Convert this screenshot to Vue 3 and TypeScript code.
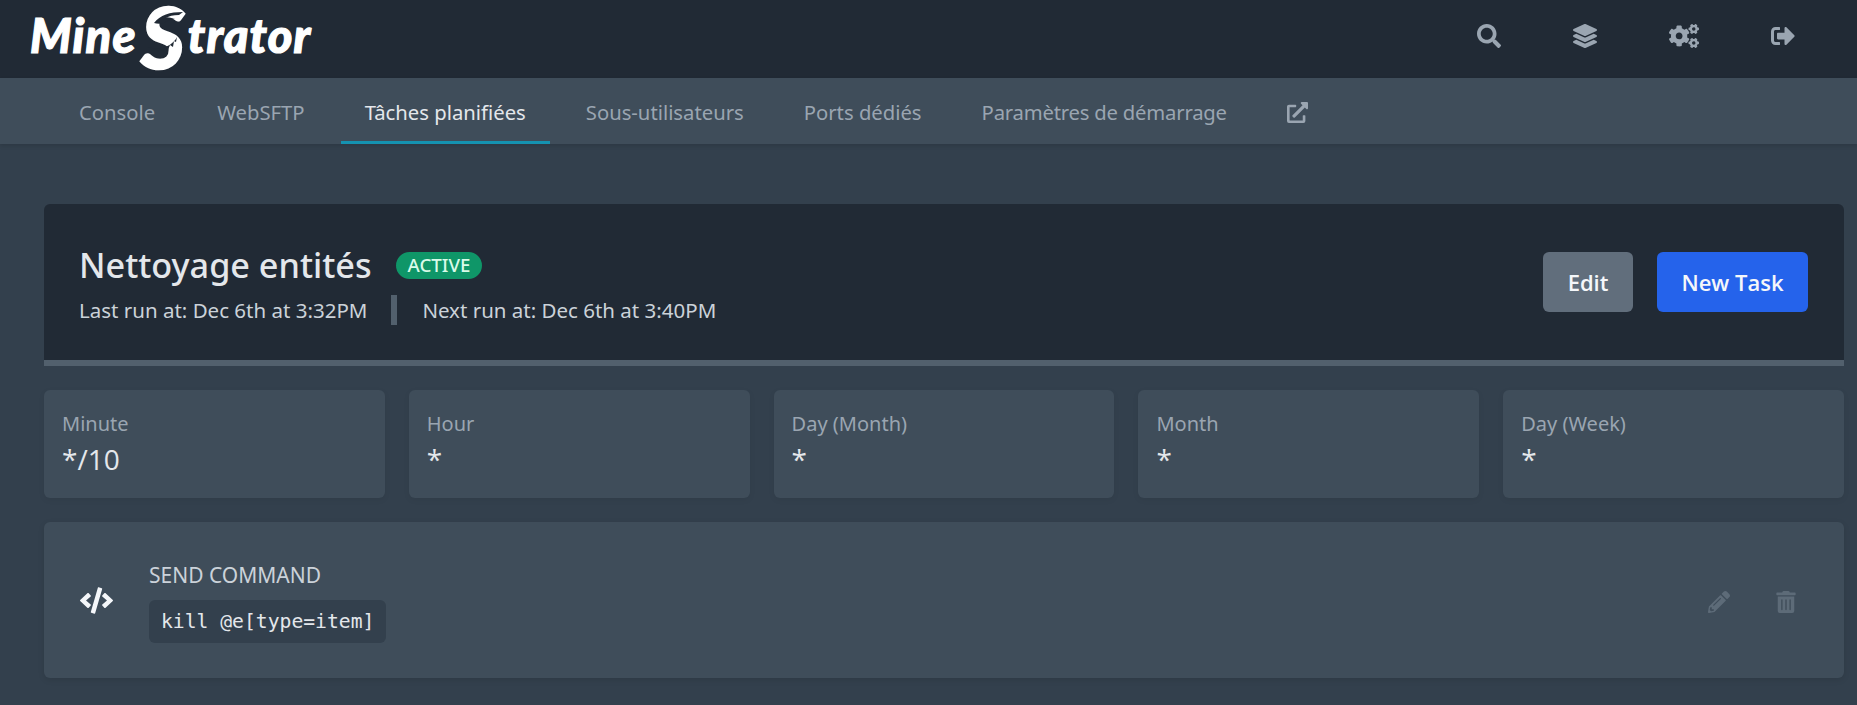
<script setup lang="ts">
const tabs = [
  { label: 'Console', active: false },
  { label: 'WebSFTP', active: false },
  { label: 'Tâches planifiées', active: true },
  { label: 'Sous-utilisateurs', active: false },
  { label: 'Ports dédiés', active: false },
  { label: 'Paramètres de démarrage', active: false },
]
const cron = [
  { label: 'Minute', value: '*/10' },
  { label: 'Hour', value: '*' },
  { label: 'Day (Month)', value: '*' },
  { label: 'Month', value: '*' },
  { label: 'Day (Week)', value: '*' },
]
</script>

<template>
  <div class="page">
    <header class="topbar">
      <div class="logo">
        <span class="logo-word">Mine</span>
        <span class="logo-s">S<svg class="logo-detail" viewBox="0 0 45 62"><path d="M11 21C17 13 27 10 40 10l-4 3c-6 0-10 1-13 3 3 0 6 0 9 1-5 0-8 2-11 4-3 1-7 1-10 0z" /><path d="M6 45l4 4 2-3 3 4 2-4 3 4 2-5 3 3 2-5 3 2 1-6 2 1 1-5c-3 6-9 10-17 11-5 1-8 0-13-1z" /></svg></span>
        <span class="logo-word">trator</span>
      </div>
      <nav class="top-icons">
        <svg class="top-icon" viewBox="0 0 512 512"><path d="M505 442.7L405.3 343c-4.5-4.5-10.6-7-17-7H372c27.6-35.3 44-79.7 44-128C416 93.1 322.9 0 208 0S0 93.1 0 208s93.1 208 208 208c48.3 0 92.7-16.4 128-44v16.3c0 6.4 2.5 12.5 7 17l99.7 99.7c9.4 9.4 24.6 9.4 33.9 0l28.3-28.3c9.4-9.4 9.4-24.6.1-34zM208 336c-70.7 0-128-57.2-128-128 0-70.7 57.2-128 128-128 70.7 0 128 57.2 128 128 0 70.7-57.2 128-128 128z" /></svg>
        <svg class="top-icon" viewBox="0 0 512 512"><path d="M12.41 148.02l232.94 105.67c6.8 3.09 14.49 3.09 21.29 0l232.94-105.67c16.55-7.51 16.55-32.52 0-40.03L266.65 2.31a25.607 25.607 0 0 0-21.29 0L12.41 107.98c-16.55 7.51-16.55 32.53 0 40.04zm487.18 88.28l-58.09-26.33-161.64 73.27c-7.56 3.43-15.59 5.17-23.86 5.17s-16.29-1.74-23.86-5.17L70.51 209.97l-58.1 26.33c-16.55 7.5-16.55 32.5 0 40l232.94 105.59c6.8 3.08 14.49 3.08 21.29 0L499.59 276.3c16.55-7.5 16.55-32.5 0-40zm0 127.8l-57.87-26.23-161.86 73.37c-7.56 3.43-15.59 5.17-23.86 5.17s-16.29-1.74-23.86-5.17L70.29 337.87 12.41 364.1c-16.55 7.5-16.55 32.5 0 40l232.94 105.59c6.8 3.08 14.49 3.08 21.29 0L499.59 404.1c16.55-7.5 16.55-32.5 0-40z" /></svg>
        <svg class="top-icon wide" viewBox="0 0 640 512"><path d="M512.1 191l-8.2 14.3c-3 5.3-9.4 7.5-15.1 5.4-11.8-4.4-22.6-10.7-32.1-18.6-4.6-3.8-5.8-10.5-2.8-15.7l8.2-14.3c-6.9-8-12.3-17.3-15.9-27.4h-16.5c-6 0-11.2-4.3-12.2-10.3-2-12-2.1-24.6 0-37.1 1-6 6.2-10.4 12.2-10.4h16.5c3.6-10.1 9-19.4 15.9-27.4l-8.2-14.3c-3-5.2-1.9-11.9 2.8-15.7 9.5-7.9 20.4-14.2 32.1-18.6 5.7-2.1 12.1.1 15.1 5.4l8.2 14.3c10.5-1.9 21.2-1.9 31.7 0L552 6.3c3-5.3 9.4-7.5 15.1-5.4 11.8 4.4 22.6 10.7 32.1 18.6 4.6 3.8 5.8 10.5 2.8 15.7l-8.2 14.3c6.9 8 12.3 17.3 15.9 27.4h16.5c6 0 11.2 4.3 12.2 10.3 2 12 2.1 24.6 0 37.1-1 6-6.2 10.4-12.2 10.4h-16.5c-3.6 10.1-9 19.4-15.9 27.4l8.2 14.3c3 5.2 1.9 11.9-2.8 15.7-9.5 7.9-20.4 14.2-32.1 18.6-5.7 2.1-12.1-.1-15.1-5.4l-8.2-14.3c-10.4 1.9-21.2 1.9-31.7 0zm-10.5-58.8c38.5 29.6 82.4-14.3 52.8-52.8-38.5-29.7-82.4 14.3-52.8 52.8zM386.3 286.1l33.7 16.8c10.1 5.8 14.5 18.1 10.5 29.1-8.9 24.2-26.4 46.4-42.6 65.8-7.4 8.9-20.2 11.1-30.3 5.3l-29.1-16.8c-16 13.7-34.6 24.6-54.9 31.7v33.6c0 11.6-8.3 21.6-19.7 23.6-24.6 4.2-50.4 4.4-75.9 0-11.5-2-20-11.9-20-23.6V418c-20.3-7.2-38.9-18-54.9-31.7L74 403c-10 5.8-22.9 3.6-30.3-5.3-16.2-19.4-33.3-41.6-42.2-65.7-4-10.9.4-23.2 10.5-29.1l33.3-16.8c-3.9-20.9-3.9-42.4 0-63.4L12 205.8c-10.1-5.8-14.6-18.1-10.5-29 8.9-24.2 26-46.4 42.2-65.8 7.4-8.9 20.2-11.1 30.3-5.3l29.1 16.8c16-13.7 34.6-24.6 54.9-31.7V57.1c0-11.5 8.2-21.5 19.6-23.5 24.6-4.2 50.5-4.4 76-.1 11.5 2 20 11.9 20 23.6v33.6c20.3 7.2 38.9 18 54.9 31.7l29.1-16.8c10-5.8 22.9-3.6 30.3 5.3 16.2 19.4 33.2 41.6 42.1 65.8 4 10.9.1 23.2-10 29.1l-33.7 16.8c3.9 21 3.9 42.5 0 63.5zm-117.6 21.1c59.2-77-28.7-164.9-105.7-105.7-59.2 77 28.7 164.9 105.7 105.7zm243.4 182.7l-8.2 14.3c-3 5.3-9.4 7.5-15.1 5.4-11.8-4.4-22.6-10.7-32.1-18.6-4.6-3.8-5.8-10.5-2.8-15.7l8.2-14.3c-6.9-8-12.3-17.3-15.9-27.4h-16.5c-6 0-11.2-4.3-12.2-10.3-2-12-2.1-24.6 0-37.1 1-6 6.2-10.4 12.2-10.4h16.5c3.6-10.1 9-19.4 15.9-27.4l-8.2-14.3c-3-5.2-1.9-11.9 2.8-15.7 9.5-7.9 20.4-14.2 32.1-18.6 5.7-2.1 12.1.1 15.1 5.4l8.2 14.3c10.5-1.9 21.2-1.9 31.7 0l8.2-14.3c3-5.3 9.4-7.5 15.1-5.4 11.8 4.4 22.6 10.7 32.1 18.6 4.6 3.8 5.8 10.5 2.8 15.7l-8.2 14.3c6.9 8 12.3 17.3 15.9 27.4h16.5c6 0 11.2 4.3 12.2 10.3 2 12 2.1 24.6 0 37.1-1 6-6.2 10.4-12.2 10.4h-16.5c-3.6 10.1-9 19.4-15.9 27.4l8.2 14.3c3 5.2 1.9 11.9-2.8 15.7-9.5 7.9-20.4 14.2-32.1 18.6-5.7 2.1-12.1-.1-15.1-5.4l-8.2-14.3c-10.4 1.9-21.2 1.9-31.7 0zM501.6 431c38.5 29.6 82.4-14.3 52.8-52.8-38.5-29.6-82.4 14.3-52.8 52.8z" /></svg>
        <svg class="top-icon" viewBox="0 0 512 512"><path d="M497 273L329 441c-15 15-41 4.5-41-17v-96H152c-13.3 0-24-10.7-24-24v-96c0-13.3 10.7-24 24-24h136V88c0-21.4 25.9-32 41-17l168 168c9.3 9.4 9.3 24.6 0 34zM192 436v-40c0-6.6-5.4-12-12-12H96c-17.7 0-32-14.3-32-32V160c0-17.7 14.3-32 32-32h84c6.6 0 12-5.4 12-12V76c0-6.6-5.4-12-12-12H96c-53 0-96 43-96 96v192c0 53 43 96 96 96h84c6.6 0 12-5.4 12-12z" /></svg>
      </nav>
    </header>

    <nav class="tabs">
      <a v-for="tab in tabs" :key="tab.label" class="tab" :class="{ active: tab.active }">{{ tab.label }}</a>
      <a class="tab">
        <svg class="ext" viewBox="0 0 512 512"><path d="M432,320H400a16,16,0,0,0-16,16V448H64V128H208a16,16,0,0,0,16-16V80a16,16,0,0,0-16-16H48A48,48,0,0,0,0,112V464a48,48,0,0,0,48,48H400a48,48,0,0,0,48-48V336A16,16,0,0,0,432,320ZM488,0h-128c-21.37,0-32.05,25.91-17,41l35.73,35.73L135,320.37a24,24,0,0,0,0,34L157.67,377a24,24,0,0,0,34,0L435.28,133.32,471,169c15,15,41,4.5,41-17V24A24,24,0,0,0,488,0Z" /></svg>
      </a>
    </nav>

    <main class="content">
      <section class="schedule">
        <div class="schedule-info">
          <div class="title-row">
            <h1>Nettoyage entités</h1>
            <span class="badge">ACTIVE</span>
          </div>
          <div class="runs">
            <span>Last run at: Dec 6th at 3:32PM</span>
            <i class="divider"></i>
            <span>Next run at: Dec 6th at 3:40PM</span>
          </div>
        </div>
        <div class="actions">
          <button class="btn gray">Edit</button>
          <button class="btn blue">New Task</button>
        </div>
      </section>

      <section class="cron">
        <div v-for="c in cron" :key="c.label" class="cron-card">
          <p class="cron-label">{{ c.label }}</p>
          <p class="cron-value">{{ c.value }}</p>
        </div>
      </section>

      <section class="task">
        <svg class="code-icon" viewBox="0 0 640 512"><path d="M278.9 511.5l-61-17.7c-6.4-1.8-10-8.5-8.2-14.9L346.2 8.7c1.8-6.4 8.5-10 14.9-8.2l61 17.7c6.4 1.8 10 8.5 8.2 14.9L293.8 503.3c-1.9 6.4-8.5 10.1-14.9 8.2zm-114-112.2l43.5-46.4c4.6-4.9 4.3-12.7-.8-17.2L117 256l90.6-79.7c5.1-4.5 5.5-12.3.8-17.2l-43.5-46.4c-4.5-4.8-12.1-5.1-17-.5L3.8 247.2c-5.1 4.7-5.1 12.8 0 17.5l144.1 135.1c4.9 4.6 12.5 4.4 17-.5zm327.2.6l144.1-135.1c5.1-4.7 5.1-12.8 0-17.5L492.1 112.1c-4.8-4.5-12.4-4.3-17 .5L431.6 159c-4.6 4.9-4.3 12.7.8 17.2L523 256l-90.6 79.7c-5.1 4.5-5.5 12.3-.8 17.2l43.5 46.4c4.5 4.9 12.1 5.1 17 .6z" /></svg>
        <div class="task-body">
          <p class="task-title">SEND COMMAND</p>
          <code class="task-code">kill @e[type=item]</code>
        </div>
        <div class="task-actions">
          <svg class="task-icon" viewBox="0 0 512 512"><path d="M497.9 142.1l-46.1 46.1c-4.7 4.7-12.3 4.7-17 0l-111-111c-4.7-4.7-4.7-12.3 0-17l46.1-46.1c18.7-18.7 49.1-18.7 67.9 0l60.1 60.1c18.8 18.7 18.8 49.1 0 67.9zM284.2 99.8L21.6 362.4.4 483.9c-2.9 16.4 11.4 30.6 27.8 27.8l121.5-21.3 262.6-262.6c4.7-4.7 4.7-12.3 0-17l-111-111c-4.8-4.7-12.4-4.7-17.1 0zM124.1 339.9c-5.5-5.5-5.5-14.3 0-19.8l154-154c5.5-5.5 14.3-5.5 19.8 0s5.5 14.3 0 19.8l-154 154c-5.5 5.5-14.3 5.5-19.8 0zM88 424h48v36.3l-64.5 11.3-31.1-31.1L51.7 376H88v48z" /></svg>
          <svg class="task-icon" viewBox="0 0 448 512"><path d="M32 464a48 48 0 0 0 48 48h288a48 48 0 0 0 48-48V128H32zm272-256a16 16 0 0 1 32 0v224a16 16 0 0 1-32 0zm-96 0a16 16 0 0 1 32 0v224a16 16 0 0 1-32 0zm-96 0a16 16 0 0 1 32 0v224a16 16 0 0 1-32 0zM432 32H312l-9.4-18.7A24 24 0 0 0 281.1 0H166.8a23.72 23.72 0 0 0-21.4 13.3L136 32H16A16 16 0 0 0 0 48v32a16 16 0 0 0 16 16h416a16 16 0 0 0 16-16V48a16 16 0 0 0-16-16z" /></svg>
        </div>
      </section>
    </main>
  </div>
</template>

<style>
html, body { background: #33404d; }
</style>

<style scoped>
.page {
  width: 1857px;
  height: 705px;
  overflow: hidden;
  background: #33404d;
  font-family: "Noto Sans", "Open Sans", sans-serif;
}
p, h1 { margin: 0; }

.topbar {
  height: 78px;
  background: #212a35;
  display: flex;
  align-items: center;
  justify-content: space-between;
  padding-left: 30px;
}
.logo {
  display: flex;
  align-items: center;
  color: #fff;
  font-family: Lato, sans-serif;
  font-style: italic;
  font-weight: 900;
  height: 78px;
}
.logo-word {
  font-size: 47px;
  line-height: 60px;
  letter-spacing: 1.2px;
  margin-top: -9px;
  -webkit-text-stroke: 1.2px #fff;
}
.logo-s {
  position: relative;
  font-size: 85px;
  line-height: 64px;
  font-style: italic;
  margin: -6px 3px 0 4px;
  -webkit-text-stroke: 1.5px #fff;
}
.logo-detail {
  position: absolute;
  left: 2px;
  top: -2px;
  width: 45px;
  height: 62px;
  fill: #212a35;
}
.top-icons {
  display: flex;
  align-items: center;
  margin: -7px 62px 0 0;
  gap: 72px;
}
.top-icon { width: 24px; height: 24px; fill: #9aa5b1; }
.top-icon.wide { width: 30px; }

.tabs {
  height: 66px;
  background: #3f4d5a;
  display: flex;
  padding-left: 55px;
  box-shadow: 0 2px 4px rgba(0, 0, 0, 0.12);
  position: relative;
  gap: 12px;
}
.tab {
  display: flex;
  align-items: center;
  padding: 2px 24px 0;
  font-size: 20.25px;
  color: #9aa5b1;
  border-bottom: 3px solid transparent;
  border-top: 3px solid transparent;
}
.tab:first-child { margin-right: 2px; }
.tab:nth-child(6) { letter-spacing: -0.2px; }
.tab.active { color: #e4e7eb; border-bottom-color: #1592b0; }
.ext { width: 21px; height: 21px; fill: #9aa5b1; }

.content {
  padding: 60px 13px 0 44px;
  display: flex;
  flex-direction: column;
}
.schedule {
  height: 162px;
  box-sizing: border-box;
  background: #212a35;
  border-bottom: 6px solid #52606d;
  border-radius: 6px 6px 0 0;
  padding: 0 36px;
  display: flex;
  align-items: center;
  justify-content: space-between;
}
.schedule-info { margin-top: 5px; }
.title-row { display: flex; align-items: center; gap: 24px; }
h1 { font-size: 34.2px; font-weight: 500; color: #e4e7eb; line-height: 42px; margin-left: -1px; }
.badge {
  background: #0f9668;
  color: #d9fbe9;
  font-size: 18.7px;
  font-weight: 500;
  height: 27px;
  line-height: 26px;
  padding: 0 12px;
  border-radius: 14px;
}
.runs {
  display: flex;
  align-items: center;
  margin-top: 9px;
  font-size: 20.5px;
  color: #cbd2d9;
  margin-left: -1px;
}
.divider {
  width: 6px;
  height: 30px;
  background: #52606d;
  margin: 0 25px 0 24px;
}
.actions { display: flex; gap: 24px; }
.btn {
  height: 60px;
  padding: 0 24.5px;
  border: 0;
  border-radius: 6px;
  font-family: "Open Sans", sans-serif;
  font-size: 22px;
  font-weight: 600;
  color: #f5f7fa;
}
.btn.gray { background: #616e7c; }
.btn.blue { background: #2563eb; }

.cron {
  margin-top: 24px;
  display: grid;
  grid-template-columns: repeat(5, 1fr);
  gap: 24px;
}
.cron-card {
  height: 108px;
  box-sizing: border-box;
  background: #3f4d5a;
  border-radius: 6px;
  padding: 20px 18px;
  box-shadow: 0 2px 6px rgba(0, 0, 0, 0.06);
}
.cron-label { font-size: 20px; color: #9aa5b1; line-height: 28px; }
.cron-value { font-family: "Open Sans", sans-serif; font-size: 28px; color: #e4e7eb; line-height: 36px; margin-top: 3px; }

.task {
  margin-top: 24px;
  height: 156px;
  box-sizing: border-box;
  background: #3f4d5a;
  border-radius: 6px;
  display: flex;
  align-items: center;
  padding: 0 36px;
  box-shadow: 0 2px 6px rgba(0, 0, 0, 0.1);
}
.code-icon { width: 33px; height: 27px; fill: #f5f7fa; }
.task-body { margin-left: 36px; flex: 1; padding-top: 6px; }
.task-title { font-size: 21px; color: #cbd2d9; line-height: 27px; margin-top: -2px; }
.task-code {
  display: inline-block;
  margin-top: 11px;
  background: #33404d;
  color: #e4e7eb;
  font-family: "DejaVu Sans Mono", monospace;
  font-size: 19.7px;
  line-height: 43px;
  padding: 0 12px;
  border-radius: 6px;
}
.task-actions { display: flex; align-items: center; gap: 45px; margin: 3px 11px 0 0; }
.task-icon { width: 22px; height: 22px; fill: #5d6b78; }
</style>
